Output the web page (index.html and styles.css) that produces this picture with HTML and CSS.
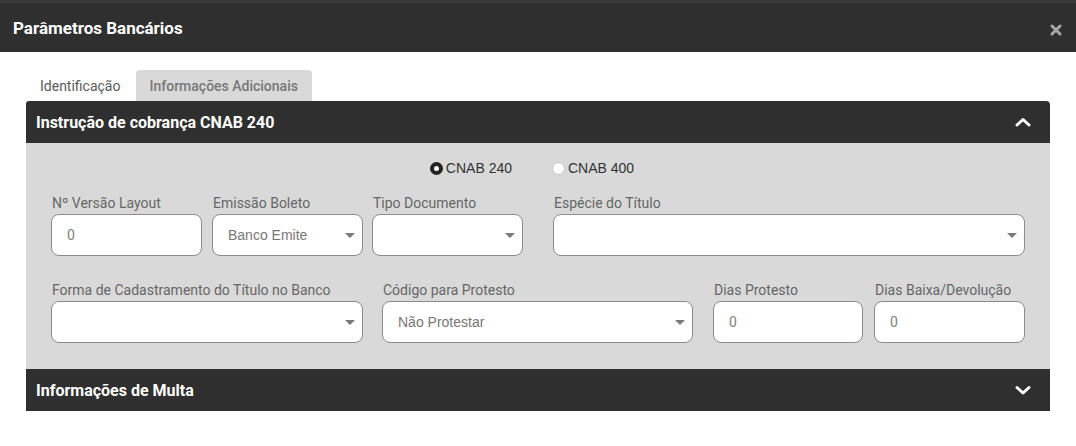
FILE: index.html
```html
<!DOCTYPE html>
<html lang="pt-BR">
<head>
<meta charset="utf-8">
<title>Parâmetros Bancários</title>
<link rel="stylesheet" href="styles.css">
</head>
<body>
<div class="modal">
  <div class="topline"></div>
  <header class="modal-header">
    <h1 class="modal-title">Parâmetros Bancários</h1>
    <span class="close" aria-label="Fechar">
      <svg width="12" height="12" viewBox="0 0 12 12"><path d="M2 2 L10 10 M10 2 L2 10" stroke="#a8a8a8" stroke-width="3" stroke-linecap="round"/></svg>
    </span>
  </header>
  <div class="modal-body">
    <nav class="tabs">
      <span class="tab">Identificação</span>
      <span class="tab active">Informações Adicionais</span>
    </nav>
    <section class="panel">
      <div class="panel-head first">
        <span class="panel-title">Instrução de cobrança CNAB 240</span>
        <svg class="chev" width="16" height="10" viewBox="0 0 16 10"><polyline points="2,8 8,2.5 14,8" fill="none" stroke="#fff" stroke-width="3" stroke-linecap="round" stroke-linejoin="round"/></svg>
      </div>
      <div class="panel-body">
        <div class="radios">
          <label class="radio"><span class="dot checked"></span>CNAB 240</label>
          <label class="radio"><span class="dot"></span>CNAB 400</label>
        </div>
        <div class="row row1">
          <div class="field w151"><span class="lbl">Nº Versão Layout</span><div class="box"><span class="val num">0</span></div></div>
          <div class="field w151 g10"><span class="lbl">Emissão Boleto</span><div class="box select"><span class="val">Banco Emite</span><span class="caret"></span></div></div>
          <div class="field w151 g9"><span class="lbl">Tipo Documento</span><div class="box select"><span class="caret"></span></div></div>
          <div class="field w472 g30"><span class="lbl">Espécie do Título</span><div class="box select"><span class="caret"></span></div></div>
        </div>
        <div class="row row2">
          <div class="field w312"><span class="lbl">Forma de Cadastramento do Título no Banco</span><div class="box select"><span class="caret"></span></div></div>
          <div class="field w311 g19"><span class="lbl">Código para Protesto</span><div class="box select"><span class="val">Não Protestar</span><span class="caret"></span></div></div>
          <div class="field w150 g20"><span class="lbl">Dias Protesto</span><div class="box"><span class="val num">0</span></div></div>
          <div class="field w151 g11"><span class="lbl">Dias Baixa/Devolução</span><div class="box"><span class="val num">0</span></div></div>
        </div>
      </div>
      <div class="panel-head">
        <span class="panel-title">Informações de Multa</span>
        <svg class="chev" width="16" height="10" viewBox="0 0 16 10"><polyline points="2,2.5 8,8 14,2.5" fill="none" stroke="#fff" stroke-width="3" stroke-linecap="round" stroke-linejoin="round"/></svg>
      </div>
    </section>
  </div>
</div>
</body>
</html>
```

FILE: styles.css
```css
* { box-sizing: border-box; }
html, body { margin: 0; padding: 0; background: #fff; }
body { font-family: Roboto, "Liberation Sans", Arial, sans-serif; width: 1076px; height: 446px; overflow: hidden; }

.topline { height: 3px; background: #3a3a3a; }
.modal-header {
  height: 49px;
  background: #2f2f2f;
  display: flex;
  align-items: center;
  justify-content: space-between;
  padding: 0 14px 0 13px;
}
.modal-title { margin: 0; font-size: 17px; font-weight: 700; color: #fff; line-height: 20px; }
.close { display: flex; align-items: center; margin-top: 5px; }

.modal-body { padding: 18px 26px 0 26px; }

.tabs { display: flex; height: 31px; padding-left: 1px; }
.tab {
  display: flex; align-items: center;
  padding: 0 13px;
  font-size: 14px; color: #5a5a5a;
  border-radius: 4px 4px 0 0;
  margin-right: 3px;
}
.tab.active { background: #d9d9d9; color: #777; font-weight: 500; padding: 0 14px 0 13px; }

.panel-head {
  height: 42px;
  background: #2f2f2f;
  display: flex; align-items: center; justify-content: space-between;
  padding: 0 19px 0 10px;
}
.panel-head.first { border-radius: 3px 4px 0 0; }
.panel-title { font-size: 16px; font-weight: 700; color: #fff; }
.chev { display: block; }

.panel-body { background: #d9d9d9; padding: 15px 25px 26px 25px; }

.radios { display: flex; justify-content: center; height: 20px; align-items: center; margin-left: -12px; }
.radio {
  display: flex; align-items: center;
  font-family: "Liberation Sans", Arial, sans-serif;
  font-size: 14px; color: #333;
  margin: 0 20px;
}
.dot {
  width: 13px; height: 13px; border-radius: 50%;
  background: #fff; border: 1px solid #c4c4c4;
  margin-right: 3px;
}
.dot.checked { border: 4px solid #222; background: #fff; }

.row { display: flex; }
.row1 { margin-top: 17px; }
.row2 { margin-top: 26px; }
.field { display: flex; flex-direction: column; }
.lbl { font-size: 14px; line-height: 16px; color: #666; margin-left: 1px; margin-bottom: 3px; white-space: nowrap; }
.box {
  height: 42px; background: #fff;
  border: 1px solid #8c8c8c; border-radius: 8px;
  display: flex; align-items: center;
  padding: 0 8px 0 15px;
  position: relative;
}
.val { font-family: "Liberation Sans", Arial, sans-serif; font-size: 14px; color: #777; }
.val.num { font-family: Roboto, sans-serif; color: #808080; }
.select .caret {
  position: absolute; right: 7px; top: 50%; margin-top: -2px;
  width: 0; height: 0;
  border-left: 5px solid transparent; border-right: 5px solid transparent;
  border-top: 5px solid #7a7a7a;
}

.w150 { width: 150px; }
.w151 { width: 151px; }
.w311 { width: 311px; }
.w312 { width: 312px; }
.w472 { width: 472px; }
.g9 { margin-left: 9px; }
.g10 { margin-left: 10px; }
.g11 { margin-left: 11px; }
.g19 { margin-left: 19px; }
.g20 { margin-left: 20px; }
.g30 { margin-left: 30px; }
```
